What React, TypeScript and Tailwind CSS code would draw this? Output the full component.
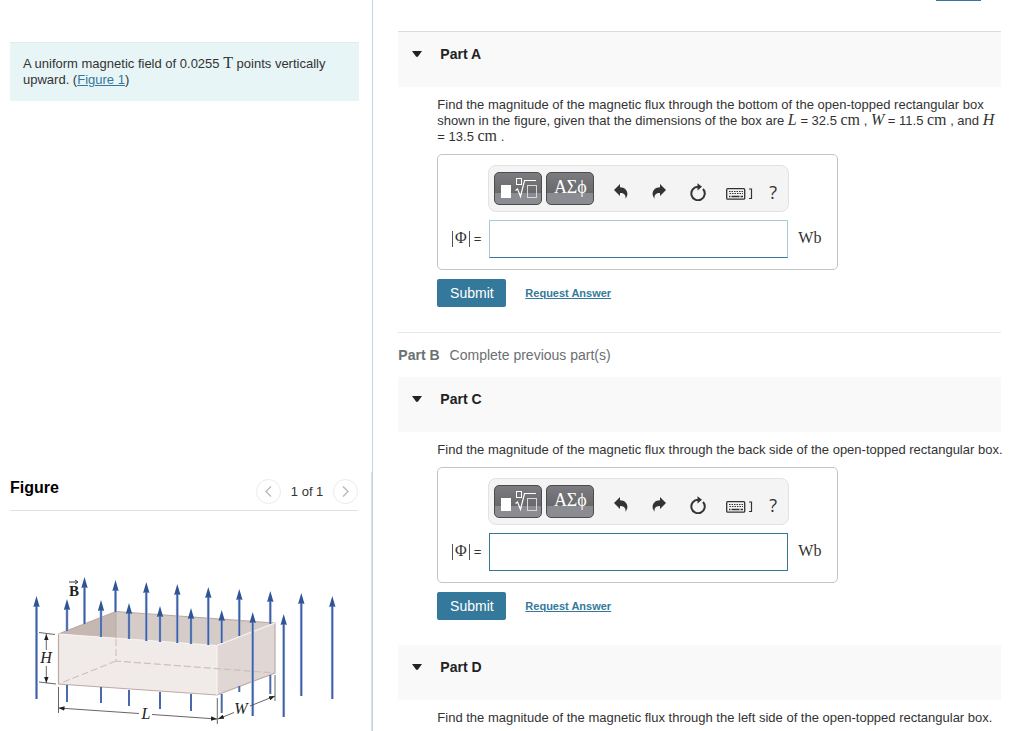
import React from 'react';

interface FieldArrow {
  x: number;
  tip: number;
  end: number;
  // part of the arrow that shows again under the box
  below?: [number, number];
}

const arrows: FieldArrow[] = [
  { x: 36.5, tip: 596, end: 699 },
  { x: 67, tip: 599, end: 631, below: [685, 702] },
  { x: 84.5, tip: 577, end: 624 },
  { x: 101, tip: 600, end: 637, below: [687, 703] },
  { x: 115.5, tip: 580, end: 612 },
  { x: 129, tip: 603, end: 639, below: [690, 706] },
  { x: 146.3, tip: 582, end: 641 },
  { x: 160, tip: 606, end: 642, below: [692, 709] },
  { x: 177.3, tip: 584, end: 643 },
  { x: 191, tip: 608, end: 644, below: [694, 711] },
  { x: 208.3, tip: 587, end: 645 },
  { x: 221.7, tip: 610, end: 643, below: [694, 713] },
  { x: 239.3, tip: 589, end: 636, below: [686, 692] },
  { x: 252.7, tip: 612, end: 716 },
  { x: 270.3, tip: 591, end: 624, below: [675, 694] },
  { x: 283.7, tip: 614, end: 717 },
  { x: 301.3, tip: 593, end: 696 },
  { x: 332.3, tip: 596, end: 699 }
];

const Arrow: React.FC<{ arrow: FieldArrow }> = ({ arrow: { x, tip, end, below } }) => (
  <g>
    <line x1={x} y1={tip + 8} x2={x} y2={end} stroke="#a9b9dc" strokeWidth="2.8" />
    <line x1={x} y1={tip + 8} x2={x} y2={end} stroke="#3d5fa6" strokeWidth="1.6" />
    <path d={`M${x} ${tip}l3.2 11q-3.2-1.4-6.4 0z`} fill="#2f5597" />
    {below && <line x1={x} y1={below[0]} x2={x} y2={below[1]} stroke="#4a69ad" strokeWidth="2" />}
  </g>
);

const FluxFigure: React.FC = () => (
  <svg className="w-[360px] max-w-full" viewBox="0 565 360 160" role="img" aria-label="Open-topped box in a vertical magnetic field">
    <defs>
      <marker id="head" viewBox="0 0 8 6" refX="8" refY="3" markerWidth="7" markerHeight="5" orient="auto-start-reverse">
        <path d="M0 0L8 3L0 6z" fill="#222" />
      </marker>
    </defs>
    <path d="M58.5 634L116 611.5L275 623L217 645.5z" fill="#d6ccc7" />
    <path d="M58.5 634L116 611.5V638.2z" fill="#c5b7b2" />
    <path d="M58.5 634L217 645.5V695L58.5 684z" fill="#f0ebe9" />
    <path d="M217 645.5L275 623V673L217 695z" fill="#e0d7d4" />
    <path d="M58.5 634L116 611.5L275 623V673L217 695L58.5 684z" fill="none" stroke="#bfa9a5" strokeWidth="1.2" />
    <path d="M58.5 634L217 645.5L275 623M217 645.5V695" fill="none" stroke="#f8f4f3" strokeWidth="1.2" />
    <path d="M116 612V638" stroke="#b8a49f" strokeWidth="0.8" />
    <path d="M116 639V661L275 673M116 661L58.5 684" fill="none" stroke="#cdbfbb" strokeWidth="1.1" strokeDasharray="7 3" />
    {arrows.map((arrow) => (
      <Arrow key={arrow.x} arrow={arrow} />
    ))}
    <g stroke="#555" strokeWidth="0.9" fill="none">
      <path d="M39 632.5L55 634.5M39 682L56 684M58.5 687V713M217.3 698V724M275 675V701" />
      <path d="M46.3 650V634" markerEnd="url(#head)" />
      <path d="M46.3 666V683" markerEnd="url(#head)" />
      <path d="M139 713.5L58.5 708" markerEnd="url(#head)" />
      <path d="M152 714.5L217 719" markerEnd="url(#head)" />
      <path d="M234 712.5L218 719" markerEnd="url(#head)" />
      <path d="M250 706L275 696" markerEnd="url(#head)" />
    </g>
    <g fontFamily="'Liberation Serif', serif" fontSize="16" fill="#222" textAnchor="middle">
      <text x="46" y="663" fontStyle="italic">H</text>
      <text x="146" y="719" fontStyle="italic">L</text>
      <text x="241" y="714" fontStyle="italic">W</text>
      <text x="74" y="596" fontSize="15" fontWeight="bold">B</text>
    </g>
    <path d="M69 582H77M75 580L78 582L75 584" stroke="#222" strokeWidth="0.9" fill="none" />
  </svg>
);

const Math: React.FC<{ children: React.ReactNode; italic?: boolean }> = ({ children, italic }) => (
  <span className={`font-['Liberation_Serif',serif] text-[16px] leading-[0] ${italic ? 'italic' : ''}`}>{children}</span>
);

const toolClass = 'flex h-8 items-center justify-center text-[#333]';
const darkToolClass =
  'flex h-[33px] w-12 items-center justify-center rounded-[5px] border border-[#4c4c4f] bg-linear-to-b from-[#7c7c80] from-0% via-[#69696c] via-64% to-[#8b8b92] to-66% text-white';

const Toolbar: React.FC = () => (
  <div className="flex h-[47px] w-[301px] items-center rounded-lg border border-[#e2e2e2] bg-[#f4f4f4] px-[5px]">
    <button type="button" aria-label="Templates" className={darkToolClass}>
      <svg width="38" height="26" viewBox="0 0 38 26" fill="none" stroke="#fff">
        <rect x="2" y="9" width="10" height="13" fill="#fff" stroke="none" />
        <rect x="17.5" y="2.5" width="5" height="6" />
        <path d="M16.500 14.500L18.500 13L21.500 20.500L25.500 4.500H37" strokeWidth="1.200" />
        <rect x="28.500" y="9.500" width="9" height="12" stroke="#d8d8dc" />
      </svg>
    </button>
    <button type="button" aria-label="Symbols" className={`${darkToolClass} ml-1 font-['Liberation_Serif',serif] text-[18px] leading-none pb-1`}>
      ΑΣϕ
    </button>
    <div className="flex flex-1 items-center pt-1.5">
      <button type="button" aria-label="Undo" className={`${toolClass} ml-5`}>
        <svg width="14" height="15" viewBox="0 0 14 15" fill="currentColor">
          <path d="M0 6L6 0V3.200C11.500 3.200 14.500 7.500 13 12L11.500 15C12 11.500 10.500 9 6 9V12z" />
        </svg>
      </button>
      <button type="button" aria-label="Redo" className={`${toolClass} ml-6`}>
        <svg width="14" height="15" viewBox="0 0 14 15" fill="currentColor">
          <path d="M14 6L8 0V3.200C2.500 3.200 -0.500 7.500 1 12L2.500 15C2 11.500 3.500 9 8 9V12z" />
        </svg>
      </button>
      <button type="button" aria-label="Reset" className={`${toolClass} ml-6`}>
        <svg width="16" height="18" viewBox="0 0 16 18">
          <path d="M13 6A6.700 6.700 0 1 1 8 3.800" fill="none" stroke="currentColor" strokeWidth="2" />
          <path d="M7.500 0.200L12 3.800L7.500 7.400z" fill="currentColor" />
        </svg>
      </button>
      <button type="button" aria-label="Keyboard shortcuts" className={`${toolClass} ml-5 pt-1`}>
        <svg width="27" height="12" viewBox="0 0 27 12" fill="none" stroke="currentColor">
          <rect x="0.700" y="0.700" width="18" height="10.500" rx="1" strokeWidth="1.300" />
          <path d="M3 3.500H17M3.500 5.500H17" strokeDasharray="1.500 1" />
          <path d="M3 8.500H4.500M5.500 8.500H13.500M14.500 8.500H17" strokeWidth="1.300" />
          <path d="M23 1H25.500V10.500H23" strokeWidth="1.200" />
        </svg>
      </button>
      <button type="button" aria-label="Help" className={`${toolClass} ml-4 font-['Open_Sans',sans-serif] text-[18px]`}>
        ?
      </button>
    </div>
  </div>
);

const PartHeader: React.FC<{ title: string; line?: boolean }> = ({ title, line }) => (
  <h2 className={`bg-[#f9f9f9] pt-[13px] pb-6 ${line ? 'border-t border-[#dcdcdc]' : ''}`}>
    <button type="button" className="flex items-center pl-[14px] text-sm leading-[18px] font-bold text-[#222]">
      <svg className="mr-[18px]" width="10" height="6" viewBox="0 0 10 6" fill="currentColor">
        <path d="M0 0H10L6 5.500Q5 6.300 4 5.500z" />
      </svg>
      {title}
    </button>
  </h2>
);

const AnswerForm: React.FC<{ id: string; active?: boolean }> = ({ id, active }) => (
  <form className="mt-[9px]">
    <div className="h-29 w-[401px] max-w-full rounded-[5px] border border-[#c4c4c4] pt-2.5">
      <div className="pl-[50px]">
        <Toolbar />
      </div>
      <div className="mt-2 flex items-center">
        <label htmlFor={id} className="flex w-[51px] items-center justify-end gap-1 pr-2 text-[13px]">
          <span className="border-x border-[#555] px-0.5">
            <Math>Φ</Math>
          </span>
          =
        </label>
        <input
          id={id}
          type="text"
          className={`h-[38px] w-[299px] border px-2 outline-none ${active ? 'border-[#34799b]' : 'border-[#a9cbd8] border-b-[#34799b]'}`}
        />
        <span className="ml-2.5">
          <Math>Wb</Math>
        </span>
      </div>
    </div>
    <div className="mt-[9px] flex items-center">
      <button type="submit" className="h-7 w-[69px] rounded-[2px] bg-[#34799b] text-sm text-white">
        Submit
      </button>
      <a href="#" className="ml-[19px] text-[11px] font-bold text-[#34799b] underline">
        Request Answer
      </a>
    </div>
  </form>
);

const App: React.FC = () => {
  return (
    <div className="grid min-h-screen grid-cols-[4fr_7fr] bg-white font-['Liberation_Sans',Arial,sans-serif] text-[13px] leading-4 text-[#333]">
      <aside className="flex flex-col">
        <section className="flex-1 pt-[42px] pr-[13px] pl-2.5">
          <p className="border-t border-[#dfecec] bg-[#e7f5f6] px-[13px] py-[13px]">
            A uniform magnetic field of 0.0255 <Math>T</Math> points vertically upward. (
            <a href="#figure" className="text-[#34799b] underline">Figure 1</a>)
          </p>
        </section>

        <section id="figure" className="border-r border-[#d5dfec] pb-1.5">
          <div className="mr-[13px] ml-2.5 flex h-[39px] items-center border-b border-[#e2e2e2]">
            <h2 className="flex-1 pb-1.5 text-base font-bold text-black">Figure</h2>
            <button type="button" aria-label="Previous figure" className="flex size-[25px] items-center justify-center rounded-full border border-[#ebebeb]">
              <svg width="7" height="11" viewBox="0 0 7 11" fill="none" stroke="#bbb" strokeWidth="1.500">
                <path d="M6 0.500L1 5.500L6 10.500" />
              </svg>
            </button>
            <span className="px-2.5 pt-0.5">1 of 1</span>
            <button type="button" aria-label="Next figure" className="flex size-[25px] items-center justify-center rounded-full border border-[#ebebeb]">
              <svg width="7" height="11" viewBox="0 0 7 11" fill="none" stroke="#bbb" strokeWidth="1.500">
                <path d="M1 0.500L6 5.500L1 10.500" />
              </svg>
            </button>
          </div>
          <div className="pt-[54px]">
            <FluxFigure />
          </div>
        </section>
      </aside>

      <main className="border-l border-[#c3d2e6] pr-[23px] pl-[25px]">
        <div className="flex h-[31px] justify-end pr-5">
          <div className="h-px w-[45px] bg-[#34799b]" />
        </div>

        <section>
          <PartHeader title="Part A" line />
          <div className="pt-2.5 pb-[25px] pl-[39px]">
            <p className="-mr-1">
              Find the magnitude of the magnetic flux through the bottom of the open-topped rectangular box shown in the figure, given that the
              dimensions of the box are <Math italic>L</Math> = 32.5 <Math>cm</Math> , <Math italic>W</Math> = 11.5 <Math>cm</Math> , and{' '}
              <Math italic>H</Math> =&nbsp;13.5 <Math>cm</Math> .
            </p>
            <AnswerForm id="part-a" />
          </div>
        </section>

        <section className="flex h-[45px] items-center gap-2.5 border-t border-[#e6e6e6] text-sm text-[#6b7070]">
          <h2 className="font-bold">Part B</h2>
          <p>Complete previous part(s)</p>
        </section>

        <section>
          <PartHeader title="Part C" />
          <div className="pt-2.5 pb-[25px] pl-[39px]">
            <p className="-mr-1">Find the magnitude of the magnetic flux through the back side of the open-topped rectangular box.</p>
            <AnswerForm id="part-c" active />
          </div>
        </section>

        <section>
          <PartHeader title="Part D" />
          <p className="-mr-1 pt-2.5 pl-[39px]">
            Find the magnitude of the magnetic flux through the left side of the open-topped rectangular box.
          </p>
        </section>
      </main>
    </div>
  );
};

export default App;
